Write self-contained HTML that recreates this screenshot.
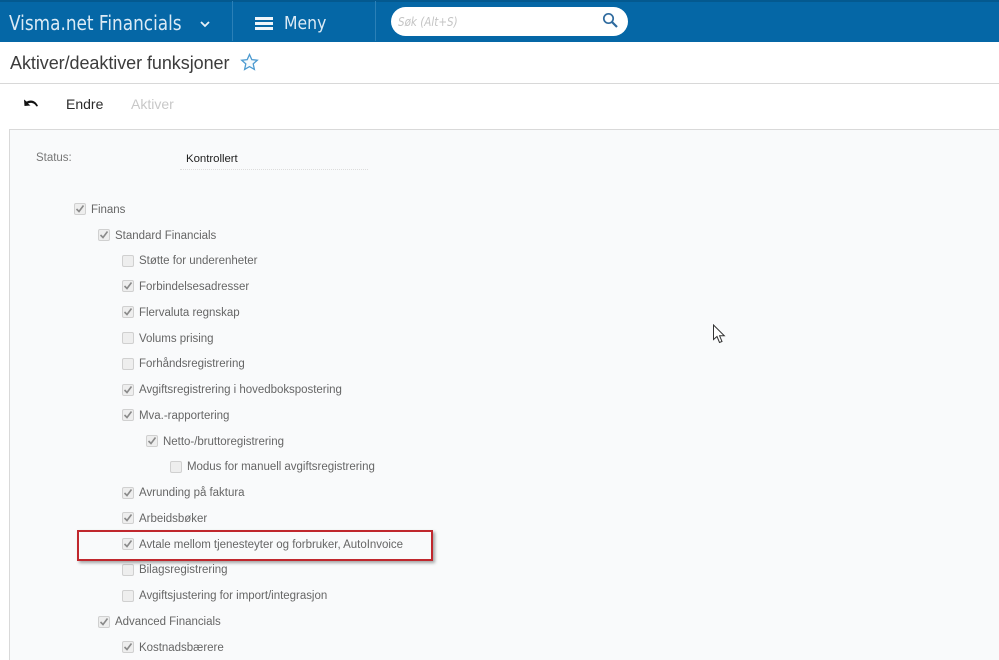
<!DOCTYPE html>
<html><head><meta charset="utf-8">
<style>
html,body{margin:0;padding:0;background:#fff}
#p{position:relative;width:999px;height:660px;overflow:hidden;background:#fff;font-family:"Liberation Sans",sans-serif}
#p div,#p svg{position:absolute}
.t{white-space:nowrap;line-height:16px;font-size:11.5px;color:#666;letter-spacing:-.02px;margin-top:1px}
.c{width:10px;height:10px;margin:-1px 0 0 -1px;border:1px solid #d0d0d0;border-radius:2px;background:#eeeeee}
</style></head><body><div id="p">
<div style="left:0;top:0;width:999px;height:41.5px;background:#0567a6"></div>
<div style="left:0;top:0;width:999px;height:1.5px;background:#04598f"></div>
<div style="left:232px;top:1px;width:1px;height:40px;background:#2b80b7"></div>
<div style="left:375px;top:1px;width:1px;height:40px;background:#2b80b7"></div>
<div style="left:9px;top:10px;font:20px/26px 'DejaVu Sans',sans-serif;color:#dbeaf5;white-space:nowrap;transform:scaleX(.844);transform-origin:0 0">Visma.net Financials</div>
<svg style="left:199px;top:20px" width="12" height="9" viewBox="0 0 12 9"><path d="M2 2 L6 6 L10 2" fill="none" stroke="#e8f1f8" stroke-width="1.8"/></svg>
<div style="left:255px;top:17px;width:18px;height:3px;background:#eef5fa"></div>
<div style="left:255px;top:22px;width:18px;height:3px;background:#eef5fa"></div>
<div style="left:255px;top:27px;width:18px;height:3px;background:#eef5fa"></div>
<div style="left:284px;top:11px;font:18px/26px 'DejaVu Sans',sans-serif;color:#dbeaf5;white-space:nowrap;transform:scaleX(.87);transform-origin:0 0">Meny</div>
<div style="left:391px;top:7px;width:237px;height:29px;border-radius:15px;background:#fff"></div>
<div style="left:398px;top:13px;font:italic 12.5px/17px 'DejaVu Sans',sans-serif;color:#c4c4c4;white-space:nowrap;transform:scaleX(.83);transform-origin:0 0">Søk (Alt+S)</div>
<svg style="left:601px;top:12px" width="18" height="17" viewBox="0 0 18 17"><circle cx="7.5" cy="6.5" r="4.7" fill="none" stroke="#2e6a9e" stroke-width="1.7"/><path d="M11 10 L16 15" stroke="#2e6a9e" stroke-width="2.2"/></svg>

<div style="left:10px;top:51px;font-size:18px;line-height:24px;color:#3c3c3c;white-space:nowrap;letter-spacing:-.06px">Aktiver/deaktiver funksjoner</div>
<svg style="left:240px;top:53px" width="19" height="18" viewBox="0 0 19 18"><path d="M9.5 1.5 L11.8 6.6 L17.3 7.2 L13.2 10.9 L14.4 16.4 L9.5 13.6 L4.6 16.4 L5.8 10.9 L1.7 7.2 L7.2 6.6 Z" fill="#f5fafd" stroke="#4c9ad0" stroke-width="1.3"/></svg>
<div style="left:0;top:83px;width:999px;height:1px;background:#d8d8d8"></div>

<svg style="left:23px;top:98px" width="16" height="12" viewBox="0 0 16 12"><path d="M1 1.5 L1.5 8 L7.5 7.5 L5 5.5 C8 4 11.5 5 13.5 8.5 L15 8 C13 3 8.5 1 3.7 3.6 Z" fill="#111"/></svg>
<div style="left:66px;top:95px;font-size:14px;line-height:18px;color:#2b2b2b;white-space:nowrap">Endre</div>
<div style="left:131px;top:95px;font-size:14px;line-height:18px;color:#c8c8c8;white-space:nowrap">Aktiver</div>

<div style="left:9px;top:129px;width:990px;height:531px;background:#f9fafb;border-top:1px solid #d9d9d9;border-left:1px solid #d9d9d9;box-sizing:border-box"></div>
<div class="t" style="left:36px;top:149px;color:#777">Status:</div>
<div class="t" style="left:186px;top:150px;color:#222;font-size:11.4px">Kontrollert</div>
<div style="left:180px;top:169px;width:188px;height:0;border-top:1px dotted #dcdcdc"></div>

<svg width="0" height="0" style="left:0;top:0"><defs><path id="k" d="M1.5 5 L4 7.5 L8.5 1.5" fill="none" stroke="#8a8a8a" stroke-width="1.6"/></defs></svg>

<div class="c" style="left:75px;top:204px"><svg width="10" height="10" viewBox="0 0 10 10" style="left:0;top:0"><use href="#k"/></svg></div><div class="t" style="left:91px;top:201px">Finans</div>
<div class="c" style="left:99px;top:230px"><svg width="10" height="10" viewBox="0 0 10 10" style="left:0;top:0"><use href="#k"/></svg></div><div class="t" style="left:115px;top:227px">Standard Financials</div>
<div class="c" style="left:123px;top:256px"></div><div class="t" style="left:139px;top:252px">Støtte for underenheter</div>
<div class="c" style="left:123px;top:281px"><svg width="10" height="10" viewBox="0 0 10 10" style="left:0;top:0"><use href="#k"/></svg></div><div class="t" style="left:139px;top:278px">Forbindelsesadresser</div>
<div class="c" style="left:123px;top:307px"><svg width="10" height="10" viewBox="0 0 10 10" style="left:0;top:0"><use href="#k"/></svg></div><div class="t" style="left:139px;top:304px">Flervaluta regnskap</div>
<div class="c" style="left:123px;top:333px"></div><div class="t" style="left:139px;top:330px">Volums prising</div>
<div class="c" style="left:123px;top:359px"></div><div class="t" style="left:139px;top:355px">Forhåndsregistrering</div>
<div class="c" style="left:123px;top:385px"><svg width="10" height="10" viewBox="0 0 10 10" style="left:0;top:0"><use href="#k"/></svg></div><div class="t" style="left:139px;top:381px">Avgiftsregistrering i hovedbokspostering</div>
<div class="c" style="left:123px;top:410px"><svg width="10" height="10" viewBox="0 0 10 10" style="left:0;top:0"><use href="#k"/></svg></div><div class="t" style="left:139px;top:407px">Mva.-rapportering</div>
<div class="c" style="left:147px;top:436px"><svg width="10" height="10" viewBox="0 0 10 10" style="left:0;top:0"><use href="#k"/></svg></div><div class="t" style="left:163px;top:433px">Netto-/bruttoregistrering</div>
<div class="c" style="left:171px;top:462px"></div><div class="t" style="left:187px;top:458px">Modus for manuell avgiftsregistrering</div>
<div class="c" style="left:123px;top:488px"><svg width="10" height="10" viewBox="0 0 10 10" style="left:0;top:0"><use href="#k"/></svg></div><div class="t" style="left:139px;top:484px">Avrunding på faktura</div>
<div class="c" style="left:123px;top:513px"><svg width="10" height="10" viewBox="0 0 10 10" style="left:0;top:0"><use href="#k"/></svg></div><div class="t" style="left:139px;top:510px">Arbeidsbøker</div>
<div class="c" style="left:123px;top:539px"><svg width="10" height="10" viewBox="0 0 10 10" style="left:0;top:0"><use href="#k"/></svg></div><div class="t" style="left:139px;top:536px">Avtale mellom tjenesteyter og forbruker, AutoInvoice</div>
<div class="c" style="left:123px;top:565px"></div><div class="t" style="left:139px;top:561px">Bilagsregistrering</div>
<div class="c" style="left:123px;top:591px"></div><div class="t" style="left:139px;top:587px">Avgiftsjustering for import/integrasjon</div>
<div class="c" style="left:99px;top:617px"><svg width="10" height="10" viewBox="0 0 10 10" style="left:0;top:0"><use href="#k"/></svg></div><div class="t" style="left:115px;top:613px">Advanced Financials</div>
<div class="c" style="left:123px;top:642px"><svg width="10" height="10" viewBox="0 0 10 10" style="left:0;top:0"><use href="#k"/></svg></div><div class="t" style="left:139px;top:639px">Kostnadsbærere</div>

<div style="left:77px;top:530px;width:352px;height:27px;border:2px solid #c0272d;box-shadow:2px 2px 3px rgba(0,0,0,.35)"></div>

<svg style="left:712px;top:324px" width="14" height="20" viewBox="0 0 14 20"><path d="M1.5 1 L1.5 15.5 L5 12.5 L7.5 18.5 L10 17.5 L7.6 11.8 L12.3 11.8 Z" fill="#fff" stroke="#333" stroke-width="1"/></svg>
</div></body></html>
